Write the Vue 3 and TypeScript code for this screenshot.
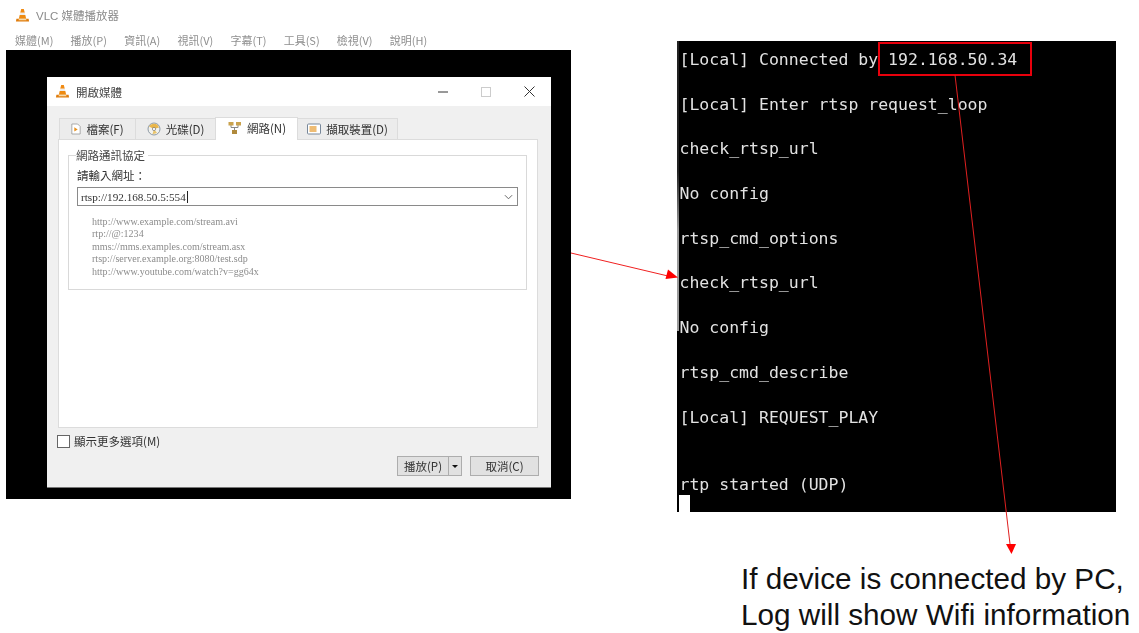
<script setup lang="ts">
const menus: string[] = ['媒體(M)', '播放(P)', '資訊(A)', '視訊(V)', '字幕(T)', '工具(S)', '檢視(V)', '說明(H)']
const hints: string[] = [
  'http://www.example.com/stream.avi',
  'rtp://@:1234',
  'mms://mms.examples.com/stream.asx',
  'rtsp://server.example.org:8080/test.sdp',
  'http://www.youtube.com/watch?v=gg64x',
]
const logA: string[] = [
  '[Local] Connected by 192.168.50.34',
  '[Local] Enter rtsp request_loop',
  'check_rtsp_url',
  'No config',
  'rtsp_cmd_options',
  'check_rtsp_url',
  'No config',
  'rtsp_cmd_describe',
  '[Local] REQUEST_PLAY',
]
</script>

<template>
  <div class="slide">
    <section class="vlc">
      <header class="vlc-title">
        <svg class="cone" viewBox="0 0 16 16"><path d="M6.600 1h2.800l1 4H5.600z" fill="#f08a12"/><path d="M5.600 5h4.800l.6 2.500H5z" fill="#eee"/><path d="M5 7.500h6l.9 4H4.100z" fill="#ee8a10"/><path d="M1.500 11.500h13l.5 3H1z" fill="#e07c0c"/><path d="M4.200 11.500h7.600l.4 1.500H3.800z" fill="#f6d9a8"/></svg>
        <span>VLC 媒體播放器</span>
      </header>
      <nav class="vlc-menu"><span v-for="m in menus" :key="m">{{ m }}</span></nav>
      <div class="vlc-video">
        <div class="dialog">
          <div class="dlg-title">
            <svg class="cone" viewBox="0 0 16 16"><path d="M6.600 1h2.800l1 4H5.600z" fill="#f08a12"/><path d="M5.600 5h4.800l.6 2.500H5z" fill="#eee"/><path d="M5 7.500h6l.9 4H4.100z" fill="#ee8a10"/><path d="M1.500 11.500h13l.5 3H1z" fill="#e07c0c"/><path d="M4.200 11.500h7.600l.4 1.500H3.800z" fill="#f6d9a8"/></svg>
            <span class="dlg-name">開啟媒體</span>
            <span class="win-btns">
              <svg viewBox="0 0 10 10" width="10" height="10"><path d="M0 5h10" stroke="#333" stroke-width="1"/></svg>
              <svg viewBox="0 0 10 10" width="10" height="10"><rect x=".5" y=".5" width="9" height="9" fill="none" stroke="#ccc"/></svg>
              <svg viewBox="0 0 11 11" width="11" height="11"><path d="M.5.500l10 10M10.500.500l-10 10" stroke="#333" stroke-width="1"/></svg>
            </span>
          </div>
          <div class="dlg-body">
            <div class="tabs">
              <div class="tab t1">
                <svg viewBox="0 0 12 14" width="10" height="12"><path d="M1 1h7l3 3v9H1z" fill="#fff" stroke="#9a9a9a"/><path d="M4 5l4 2.500L4 10z" fill="#e8901c"/></svg>
                <span>檔案(F)</span>
              </div>
              <div class="tab t2">
                <svg viewBox="0 0 14 14" width="14" height="14"><circle cx="7" cy="7" r="6" fill="#f2f2ee" stroke="#8e9aa5"/><path d="M2 4.500L7 7l5-1.500A5.500 5.500 0 0 0 2 4.500z" fill="#e9b64a"/><path d="M7 7l-1.500 5.300L10 11z" fill="#e9c46a"/><circle cx="7" cy="7" r="1.600" fill="#fff" stroke="#777" stroke-width=".7"/></svg>
                <span>光碟(D)</span>
              </div>
              <div class="tab t3 active">
                <svg viewBox="0 0 14 14" width="15" height="14"><path d="M3.500 4v2.500h7V4M7 6.500V9" fill="none" stroke="#888"/><rect x="1" y="1" width="5" height="3.500" fill="#c9a24e"/><rect x="8.500" y="1" width="5" height="3.500" fill="#c9a24e"/><rect x="4.500" y="9" width="5" height="4" fill="#b08a3c"/></svg>
                <span>網路(N)</span>
              </div>
              <div class="tab t4">
                <svg viewBox="0 0 14 12" width="14" height="12"><rect x=".5" y="1" width="13" height="10" rx="1" fill="#fff" stroke="#78889a"/><rect x="2.500" y="3" width="7" height="6" fill="#eebc74"/></svg>
                <span>擷取裝置(D)</span>
              </div>
            </div>
            <div class="pane">
              <fieldset class="group">
                <legend>網路通訊協定</legend>
                <div class="field-label">請輸入網址：</div>
                <div class="combo">
                  <span class="combo-text">rtsp://192.168.50.5:554<i class="caret"></i></span>
                  <svg viewBox="0 0 10 6" width="9" height="6"><path d="M1 1l4 4 4-4" fill="none" stroke="#666" stroke-width="1.100"/></svg>
                </div>
                <div class="hints"><div v-for="h in hints" :key="h">{{ h }}</div></div>
              </fieldset>
            </div>
            <label class="check"><i class="box"></i><span>顯示更多選項(M)</span></label>
            <div class="actions">
              <div class="btn split">
                <span class="play">播放(P)</span>
                <span class="drop"><i></i></span>
              </div>
              <div class="btn cancel">取消(C)</div>
            </div>
          </div>
        </div>
      </div>
    </section>

    <section class="term">
      <div v-for="(l, i) in logA" :key="i" class="line">{{ l }}</div>
      <div class="line last">rtp started (UDP)</div>
      <i class="cursor"></i>
      <i class="edge"></i>
    </section>

    <p class="note">If device is connected by PC,<br />Log will show Wifi information</p>

    <svg class="marks" viewBox="0 0 1139 633" width="1139" height="633">
      <rect x="879" y="43" width="152" height="32" fill="none" stroke="#e8000c" stroke-width="2"/>
      <path d="M571 253L668 276" stroke="#f02020" stroke-width="1"/>
      <path d="M678 277.500L665.500 279L668 269.500z" fill="#ff0000"/>
      <path d="M955 75L1010 544" stroke="#e02020" stroke-width="1"/>
      <path d="M1011.500 554L1006 544H1016z" fill="#ff0000"/>
    </svg>
  </div>
</template>

<style>
html, body { margin: 0; background: #fff; }
</style>

<style scoped>
.slide {
  position: relative;
  width: 1139px;
  height: 633px;
  overflow: hidden;
  background: #fff;
  font-family: "Noto Sans CJK TC", "Liberation Sans", sans-serif;
}
.vlc {
  position: absolute;
  left: 6px;
  top: 0;
  width: 565px;
  height: 499px;
  display: flex;
  flex-direction: column;
  filter: blur(0.3px);
}
.vlc-title {
  height: 30px;
  display: flex;
  align-items: center;
  gap: 6px;
  padding-left: 9px;
  font-size: 11.500px;
  color: #8a8a8a;
  font-family: "Liberation Sans", "Noto Sans CJK TC", sans-serif;
}
.cone { width: 15px; height: 15px; flex: none; }
.vlc-menu {
  height: 20px;
  display: flex;
  gap: 17.200px;
  padding-left: 9px;
  font-size: 11px;
  line-height: 20px;
  color: #8f8f8f;
  white-space: nowrap;
}
.vlc-video {
  flex: 1;
  background: #000;
  padding: 27px 20px 11px 41px;
  display: flex;
}
.dialog {
  flex: 1;
  display: flex;
  flex-direction: column;
  background: #f0f0f0;
  border-bottom: 1px solid #777;
}
.dlg-title {
  height: 29px;
  background: #fff;
  display: flex;
  align-items: center;
  padding-left: 8px;
  gap: 6px;
}
.dlg-name { font-size: 11.500px; color: #444; }
.win-btns {
  margin-left: auto;
  margin-right: 16px;
  display: flex;
  align-items: center;
  gap: 33px;
}
.dlg-body {
  flex: 1;
  padding: 10px 13px 11px 11px;
  display: flex;
  flex-direction: column;
}
.tabs {
  display: flex;
  height: 23px;
  padding-left: 1px;
  align-items: flex-end;
}
.tab {
  height: 21px;
  display: flex;
  align-items: center;
  justify-content: center;
  gap: 5px;
  padding-bottom: 1px;
  background: #ececec;
  border: 1px solid #dcdcdc;
  border-bottom: none;
  margin-right: -1px;
  box-sizing: border-box;
  font-size: 11.500px;
  color: #333;
  white-space: nowrap;
}
.t1 { width: 77px; }
.t2 { width: 81px; }
.t3 { width: 83px; }
.t4 { width: 101px; }
.tab.active {
  height: 23px;
  background: #fff;
  position: relative;
  z-index: 1;
  margin-bottom: -1px;
  padding-bottom: 3px;
}
.pane {
  height: 289px;
  box-sizing: border-box;
  background: #fff;
  border: 1px solid #dcdcdc;
  padding: 8px 10px 0 9px;
}
.group {
  margin: 0;
  padding: 0 8px;
  height: 142px;
  box-sizing: border-box;
  border: 1px solid #d9d9d9;
  min-width: 0;
}
.group legend {
  padding: 0 3px 0 0;
  margin-left: -1px;
  font-size: 11.500px;
  line-height: 14px;
  color: #444;
}
.field-label {
  font-size: 11.500px;
  line-height: 14px;
  margin-top: 6px;
  color: #333;
}
.combo {
  margin-top: 5px;
  height: 19px;
  box-sizing: border-box;
  border: 1px solid #8a8a8a;
  background: #fff;
  display: flex;
  align-items: center;
  justify-content: space-between;
  padding: 0 4px 0 3px;
}
.combo-text {
  font-family: "Liberation Serif", serif;
  font-size: 11.200px;
  color: #333;
  display: flex;
  align-items: center;
}
.caret { width: 1px; height: 12px; background: #222; margin-left: 1px; }
.hints {
  margin: 10px 0 0 15px;
  font-family: "Liberation Serif", serif;
  font-size: 10.050px;
  line-height: 12.400px;
  color: #8c8c8c;
  white-space: nowrap;
}
.check {
  display: flex;
  align-items: center;
  gap: 4px;
  margin-top: 6px;
  margin-left: -1px;
  font-size: 11.500px;
  color: #333;
  height: 14px;
}
.box {
  width: 11px;
  height: 11px;
  border: 1px solid #666;
  background: #fff;
  flex: none;
}
.actions {
  margin-top: auto;
  display: flex;
  justify-content: flex-end;
  gap: 8px;
  margin-right: -1px;
}
.btn {
  height: 20px;
  box-sizing: border-box;
  background: #e1e1e1;
  border: 1px solid #adadad;
  font-size: 11.500px;
  line-height: 18px;
  color: #333;
  text-align: center;
}
.split { width: 65px; display: flex; }
.play { flex: 1; }
.drop {
  width: 12px;
  border-left: 1px solid #adadad;
  display: flex;
  align-items: center;
  justify-content: center;
}
.drop i {
  border-left: 3px solid transparent;
  border-right: 3px solid transparent;
  border-top: 3px solid #111;
}
.cancel { width: 69px; }
.term {
  position: absolute;
  left: 677px;
  top: 41px;
  width: 439px;
  height: 471px;
  box-sizing: border-box;
  background: #000;
  padding: 1px 0 0 2.500px;
  overflow: hidden;
  color: #e2e2e2;
  font-family: "DejaVu Sans Mono", monospace;
  font-size: 16.500px;
  filter: blur(0.35px);
}
.line { height: 44.700px; line-height: 36px; white-space: pre; }
.line.last { margin-top: 22.500px; height: auto; line-height: 36px; }
.cursor {
  position: absolute;
  left: 2px;
  bottom: 0;
  width: 11px;
  height: 17px;
  background: #fff;
}
.edge {
  position: absolute;
  left: 0;
  top: 0;
  width: 2px;
  height: 290px;
  background: linear-gradient(#222 0, #222 45%, #9a9a9a 65%, #9a9a9a 100%);
}
.note {
  position: absolute;
  left: 741px;
  top: 561px;
  margin: 0;
  font-family: "Liberation Sans", sans-serif;
  font-size: 29.700px;
  line-height: 36px;
  color: #111;
  white-space: nowrap;
}
.marks {
  position: absolute;
  left: 0;
  top: 0;
  pointer-events: none;
}
</style>
